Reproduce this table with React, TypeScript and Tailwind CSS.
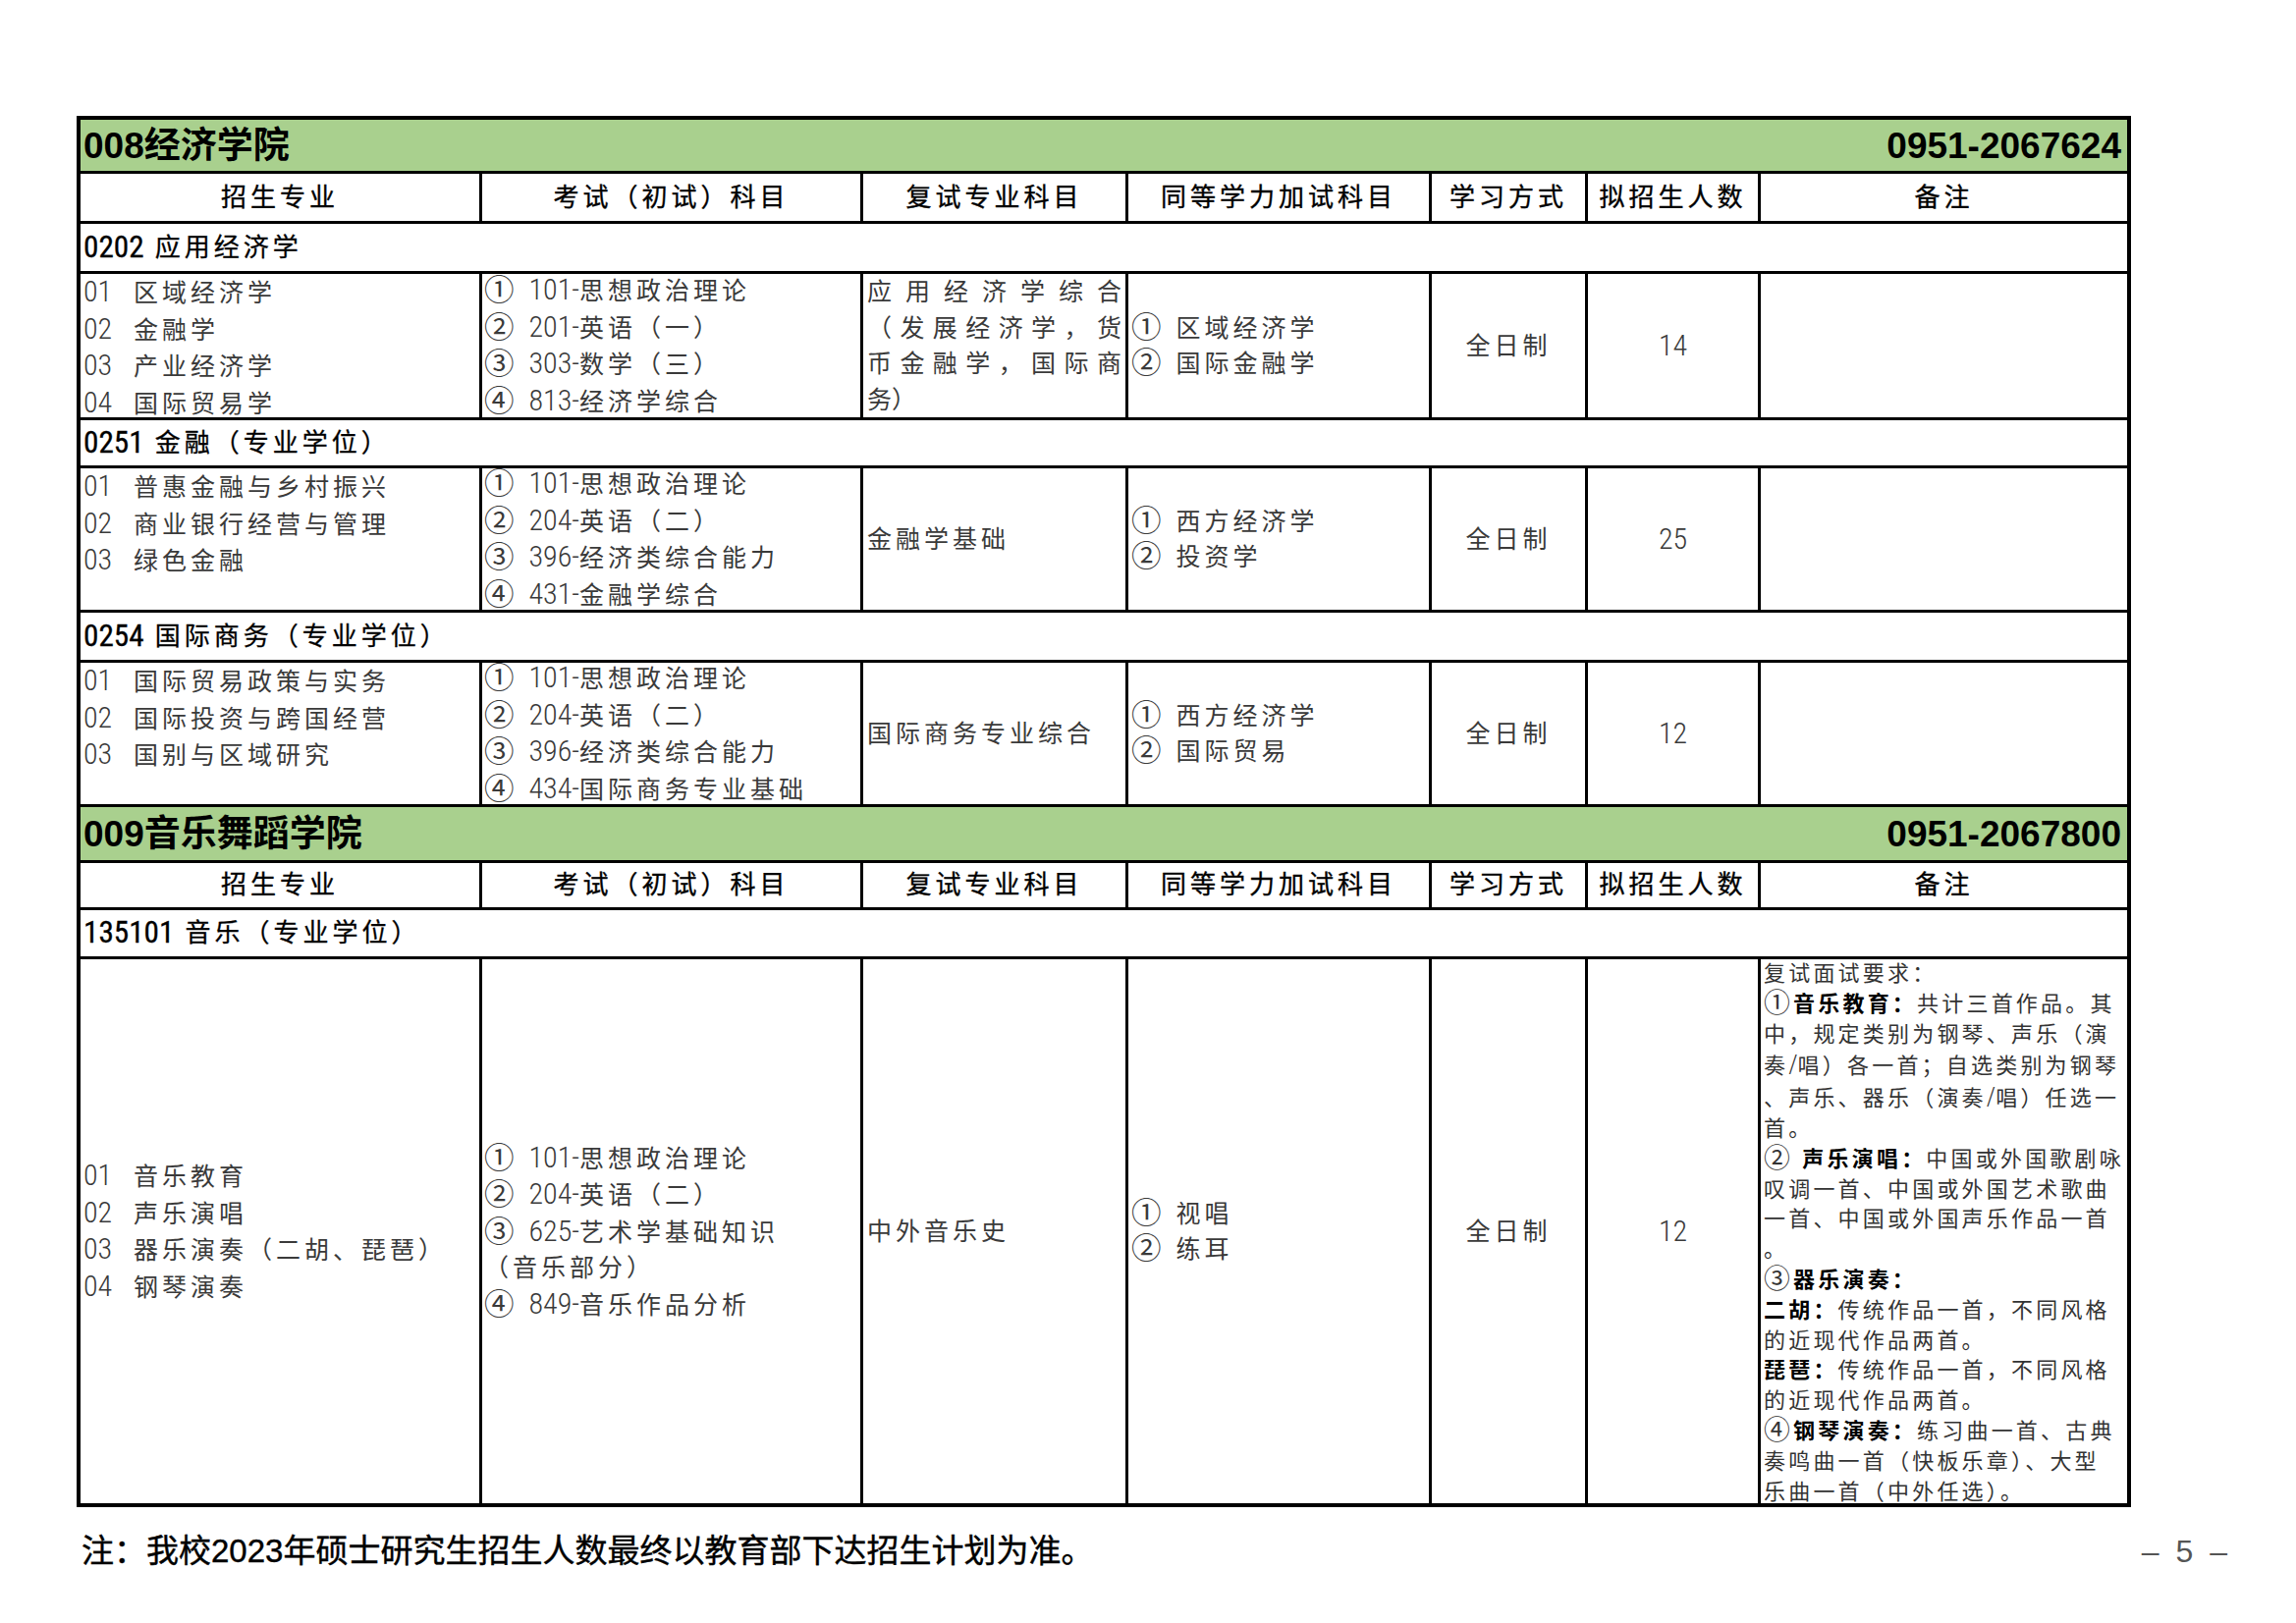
import React from 'react';

type Seg = { t: string; b?: boolean };

type Block = {
  majors: string[];
  majorsCenter?: boolean;
  exams: string[];
  retest: React.ReactNode;
  extra: string[];
  count: string;
  note?: React.ReactNode;
  last?: boolean;
};

const HEADS = ['招生专业', '考试（初试）科目', '复试专业科目', '同等学力加试科目', '学习方式', '拟招生人数', '备注'];

// latin runs and circled numbers get their own face/size, the pdf font draws them taller and thinner
function Mix({ s, dark = false }: { s: string; dark?: boolean }) {
  const parts = s.split(/([0-9A-Za-z\-\/]+|[①-⑳])/);
  return (
    <>
      {parts.map((p, i) => {
        if (/^[①-⑳]$/.test(p))
          return (
            <span key={i} className="text-[1.22em] leading-none align-[-0.04em]">
              {p}
            </span>
          );
        if (/^[0-9A-Za-z\-\/]+$/.test(p))
          return (
            <span
              key={i}
              className={`tracking-normal text-[1.2em] [font-family:'Roboto_Condensed','Roboto','Liberation_Sans',sans-serif] ${dark ? 'font-normal' : 'font-light'}`}
            >
              {p}
            </span>
          );
        return <span key={i}>{p}</span>;
      })}
    </>
  );
}

function Spread({ s }: { s: string }) {
  return (
    <div className="flex justify-between">
      {Array.from(s).map((c, i) => (
        <span key={i}>{c}</span>
      ))}
    </div>
  );
}

function Green({ name, phone }: { name: string; phone: string }) {
  return (
    <div className="col-span-7 flex items-center justify-between bg-[#a9d08e] border-b-[3px] border-black pl-[3px] pr-[6px] text-[37px] font-bold leading-none tracking-normal text-black">
      <span>{name}</span>
      <span>{phone}</span>
    </div>
  );
}

function Head() {
  return (
    <>
      {HEADS.map((h, i) => (
        <div
          key={h}
          className={`flex items-center justify-center border-b-[3px] border-black text-[26px] tracking-[4px] text-black [-webkit-text-stroke:0.35px_black] ${i < 6 ? 'border-r-[3px]' : ''}`}
        >
          {h}
        </div>
      ))}
    </>
  );
}

function Sub({ text }: { text: string }) {
  return (
    <div className="col-span-7 flex items-center border-b-[3px] border-black pl-[3px] text-[26px] tracking-[4px] text-black whitespace-pre [-webkit-text-stroke:0.3px_black]">
      <Mix s={text} dark />
    </div>
  );
}

function Lines({ items }: { items: string[] }) {
  return (
    <>
      {items.map((l, i) => (
        <div key={i}>
          <Mix s={l} />
        </div>
      ))}
    </>
  );
}

function DataRow({ b }: { b: Block }) {
  const bottom = b.last ? '' : 'border-b-[3px]';
  return (
    <>
      <div className={`flex flex-col ${b.majorsCenter ? 'justify-center' : 'justify-start'} border-r-[3px] ${bottom} border-black pl-[3px]`}>
        <Lines items={b.majors} />
      </div>
      <div className={`flex flex-col justify-center border-r-[3px] ${bottom} border-black pl-[2px]`}>
        <Lines items={b.exams} />
      </div>
      <div className={`flex flex-col justify-center border-r-[3px] ${bottom} border-black px-[4px]`}>{b.retest}</div>
      <div className={`flex flex-col justify-center border-r-[3px] ${bottom} border-black pl-[3px]`}>
        <Lines items={b.extra} />
      </div>
      <div className={`flex items-center justify-center border-r-[3px] ${bottom} border-black`}>全日制</div>
      <div className={`flex items-center justify-center border-r-[3px] ${bottom} border-black`}>
        <Mix s={b.count} />
      </div>
      <div className={`${bottom} border-black pl-[3px]`}>{b.note}</div>
    </>
  );
}

const REMARK: Seg[][] = [
  [{ t: '复试面试要求：' }],
  [{ t: '①' }, { t: '音乐教育：', b: true }, { t: '共计三首作品。其' }],
  [{ t: '中，规定类别为钢琴、声乐（演' }],
  [{ t: '奏/唱）各一首；自选类别为钢琴' }],
  [{ t: '、声乐、器乐（演奏/唱）任选一' }],
  [{ t: '首。' }],
  [{ t: '② ' }, { t: '声乐演唱：', b: true }, { t: '中国或外国歌剧咏' }],
  [{ t: '叹调一首、中国或外国艺术歌曲' }],
  [{ t: '一首、中国或外国声乐作品一首' }],
  [{ t: '。' }],
  [{ t: '③' }, { t: '器乐演奏：', b: true }],
  [{ t: '二胡：', b: true }, { t: '传统作品一首，不同风格' }],
  [{ t: '的近现代作品两首。' }],
  [{ t: '琵琶：', b: true }, { t: '传统作品一首，不同风格' }],
  [{ t: '的近现代作品两首。' }],
  [{ t: '④' }, { t: '钢琴演奏：', b: true }, { t: '练习曲一首、古典' }],
  [{ t: '奏鸣曲一首（快板乐章）、大型' }],
  [{ t: '乐曲一首（中外任选）。' }],
];

function Remark() {
  return (
    <div className="text-[22px] leading-[30.8px] tracking-[3.2px] text-[#333] font-normal">
      {REMARK.map((line, i) => (
        <div key={i} className="whitespace-pre">
          {line.map((s, j) => (
            <span key={j} className={s.b ? 'font-bold text-black' : ''}>
              <Mix s={s.t} />
            </span>
          ))}
        </div>
      ))}
    </div>
  );
}

const ECON: Block = {
  majors: ['01  区域经济学', '02  金融学', '03  产业经济学', '04  国际贸易学'],
  exams: ['① 101-思想政治理论', '② 201-英语（一）', '③ 303-数学（三）', '④ 813-经济学综合'],
  retest: (
    <div className="flex flex-col justify-start h-full tracking-normal">
      <Spread s="应用经济学综合" />
      <Spread s="（发展经济学，货" />
      <Spread s="币金融学，国际商" />
      <div>务）</div>
    </div>
  ),
  extra: ['① 区域经济学', '② 国际金融学'],
  count: '14',
};

const FIN: Block = {
  majors: ['01  普惠金融与乡村振兴', '02  商业银行经营与管理', '03  绿色金融'],
  exams: ['① 101-思想政治理论', '② 204-英语（二）', '③ 396-经济类综合能力', '④ 431-金融学综合'],
  retest: <div>金融学基础</div>,
  extra: ['① 西方经济学', '② 投资学'],
  count: '25',
};

const BIZ: Block = {
  majors: ['01  国际贸易政策与实务', '02  国际投资与跨国经营', '03  国别与区域研究'],
  exams: ['① 101-思想政治理论', '② 204-英语（二）', '③ 396-经济类综合能力', '④ 434-国际商务专业基础'],
  retest: <div>国际商务专业综合</div>,
  extra: ['① 西方经济学', '② 国际贸易'],
  count: '12',
};

const MUSIC: Block = {
  majors: ['01  音乐教育', '02  声乐演唱', '03  器乐演奏（二胡、琵琶）', '04  钢琴演奏'],
  majorsCenter: true,
  exams: ['① 101-思想政治理论', '② 204-英语（二）', '③ 625-艺术学基础知识', '（音乐部分）', '④ 849-音乐作品分析'],
  retest: <div>中外音乐史</div>,
  extra: ['① 视唱', '② 练耳'],
  count: '12',
  note: <Remark />,
  last: true,
};

export default function App() {
  return (
    <div className="w-[2338px] h-[1653px] bg-white pt-[118px] pl-[78px] [font-family:'Liberation_Sans','Noto_Sans_CJK_SC',sans-serif] text-black">
      <div className="w-[2092px] grid grid-cols-[409px_388px_270px_309px_159px_176px_373px] grid-rows-[55px_51px_51px_149px_49px_147px_51px_147px_57px_48px_50px_554px] border-[4px] border-black text-[25px] leading-[36.5px] tracking-[4px] text-[#3a3a3a] whitespace-pre">
        <Green name="008经济学院" phone="0951-2067624" />
        <Head />
        <Sub text="0202 应用经济学" />
        <DataRow b={ECON} />
        <Sub text="0251 金融（专业学位）" />
        <DataRow b={FIN} />
        <Sub text="0254 国际商务（专业学位）" />
        <DataRow b={BIZ} />
        <Green name="009音乐舞蹈学院" phone="0951-2067800" />
        <Head />
        <Sub text="135101 音乐（专业学位）" />
        <DataRow b={MUSIC} />
      </div>

      <div className="w-[2194px] mt-[21px] pl-[5px] flex items-center justify-between">
        <div className="text-[33px] leading-[44px] text-black [-webkit-text-stroke:0.4px_black]">注：我校2023年硕士研究生招生人数最终以教育部下达招生计划为准。</div>
        <div className="text-[32px] tracking-[4px] text-[#555] whitespace-pre">– 5 –</div>
      </div>
    </div>
  );
}
